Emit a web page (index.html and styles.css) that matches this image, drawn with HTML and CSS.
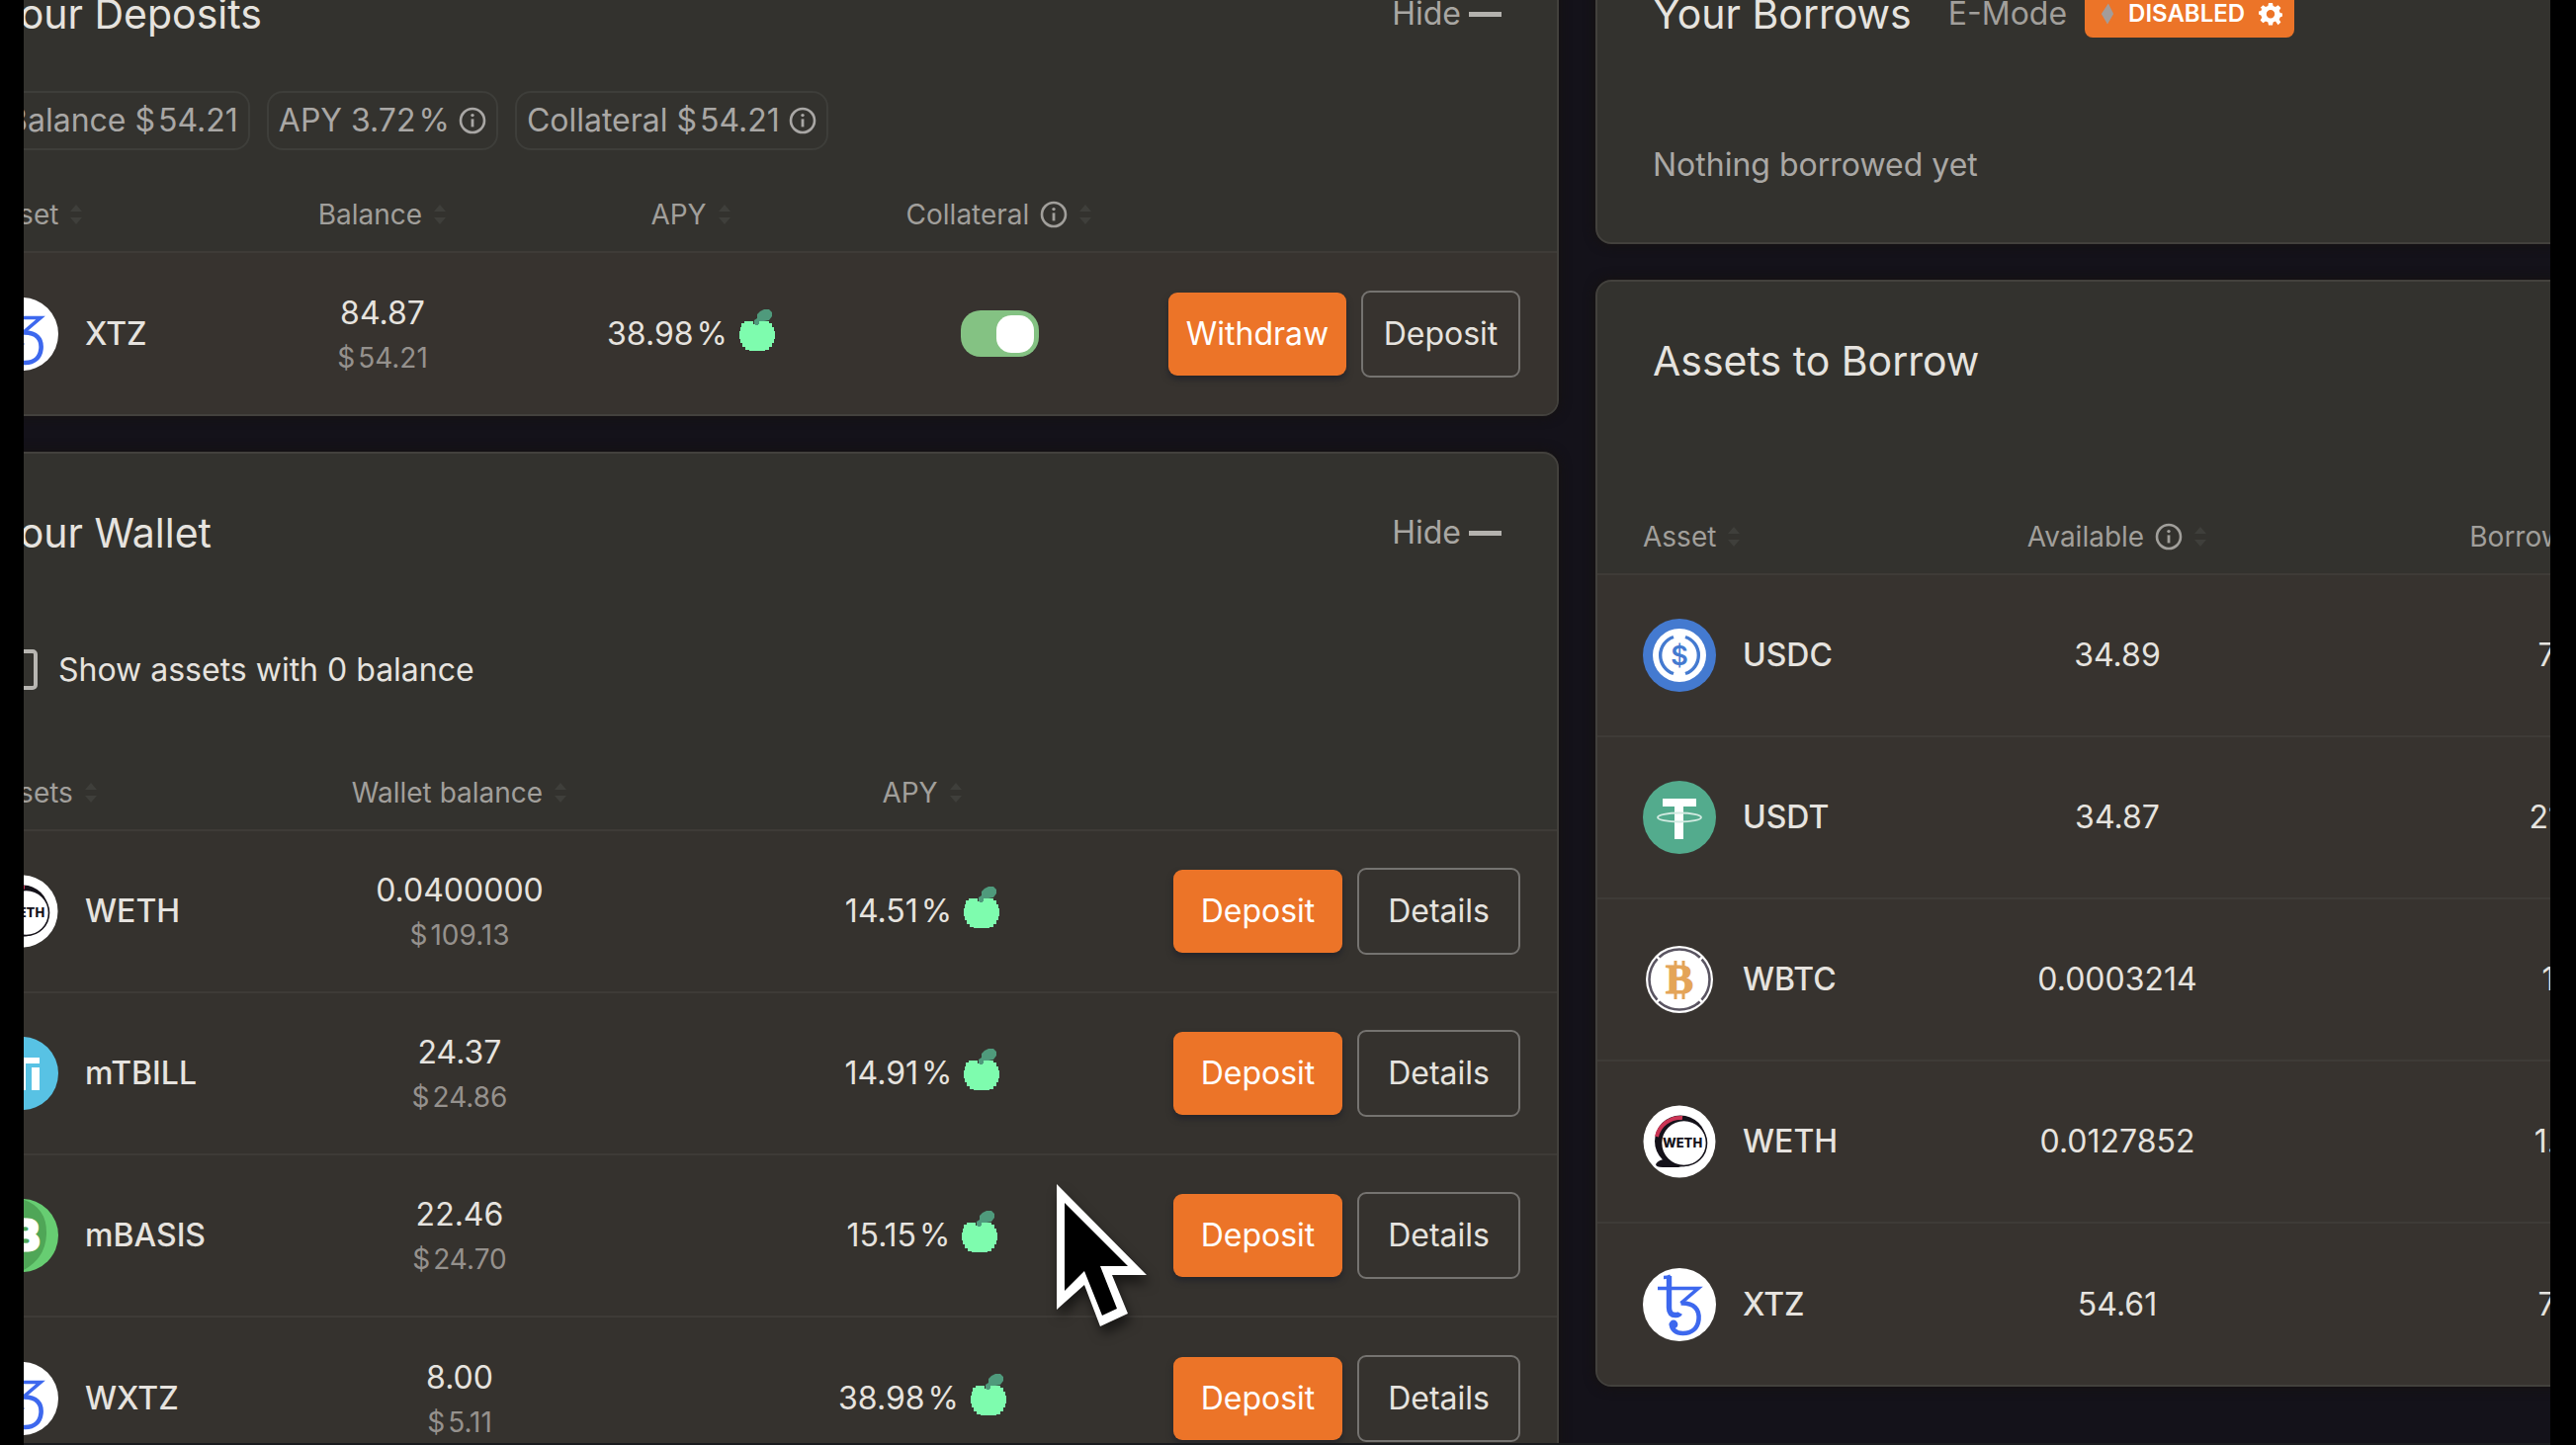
FILE: index.html
```html
<!DOCTYPE html>
<html lang="en">
<head>
<meta charset="utf-8">
<title>Dashboard</title>
<meta name="viewport" content="width=device-width, initial-scale=1">
<link rel="stylesheet" href="styles.css">
</head>
<body>
<svg class="sprite" aria-hidden="true">
  <symbol id="i-info" viewBox="0 0 28 28"><circle cx="14" cy="14" r="12" fill="none" stroke="currentColor" stroke-width="2.6"/><circle cx="14" cy="8.6" r="1.7" fill="currentColor"/><path d="M14 12.4v8" stroke="currentColor" stroke-width="2.8"/></symbol>
  <symbol id="i-sort" viewBox="0 0 14 24"><path d="M7 2l6 7H1zM7 22l6-7H1z" fill="currentColor"/></symbol>
  <symbol id="i-apple" viewBox="0 0 36 42"><path d="M15 16v-5l3-2V5l3-3 4-2h5l3 3v4l-3 4-5 1-4 2-1 2z" fill="#4f9a7c"/><path d="M5 12h9v3h6v-3h10v2h3v4h2v4h1v8h-1v4h-2v4h-3v3h-4v2H10v-2H6v-3H3v-4H1v-4H0v-8h1v-4h1v-4h3z" fill="#7efcae"/><path d="M16 16v-4l3-1v5z" fill="#4f9a7c"/></symbol>
  <symbol id="c-usdc" viewBox="0 0 74 74"><circle cx="37" cy="37" r="37" fill="#447ad0"/><circle cx="37" cy="37" r="27" fill="#fff"/><path d="M31 18.500a19.500 19.500 0 0 0 0 37M43 18.500a19.500 19.500 0 0 1 0 37" fill="none" stroke="#447ad0" stroke-width="3.400"/><text x="37" y="47" text-anchor="middle" font-family="Inter, sans-serif" font-size="27" font-weight="600" fill="#447ad0">$</text></symbol>
  <symbol id="c-usdt" viewBox="0 0 74 74"><circle cx="37" cy="37" r="37" fill="#53ab8d"/><path d="M20 18h34v8H41v33h-9V26H20z" fill="#fff"/><ellipse cx="37" cy="37" rx="22" ry="4.500" fill="none" stroke="#d3ebe2" stroke-width="1.800"/></symbol>
  <symbol id="c-wbtc" viewBox="0 0 74 74"><circle cx="37" cy="37" r="34" fill="#fff"/><circle cx="37" cy="37" r="30.500" fill="none" stroke="#5a5562" stroke-width="2.600" stroke-dasharray="45.400 2.500" stroke-dashoffset="22.700"/><path d="M33 18v6M41 18v6M33 50v7M41 50v7" stroke="#e4a458" stroke-width="3"/><text x="37" y="51" text-anchor="middle" font-family="Liberation Serif, serif" font-size="42" font-weight="700" fill="#e4a458" stroke="#e4a458" stroke-width="1.200">B</text></symbol>
  <symbol id="c-weth" viewBox="0 0 74 74"><circle cx="37" cy="37" r="36.500" fill="#fff"/><circle cx="38" cy="36.500" r="26" fill="#15121a"/><path d="M14 32a24.500 24.500 0 0 1 26-19" fill="none" stroke="#cc3555" stroke-width="4"/><path d="M13 60q3-5 10-5l15 8H20q-7 0-7-3z" fill="#15121a"/><circle cx="41.500" cy="38.500" r="23" fill="#fff" stroke="#15121a" stroke-width="1.600"/><text x="40" y="43" text-anchor="middle" font-family="Inter, sans-serif" font-size="13" font-weight="800" fill="#15121a">WETH</text></symbol>
  <symbol id="c-xtz" viewBox="0 0 74 74"><circle cx="37" cy="37" r="37" fill="#fff"/><path d="M26.500 8v32q0 8 7 7.500 3 0 4-2" fill="none" stroke="#3d68ee" stroke-width="5.400"/><path d="M21 9.500q4 0 7-1.500M15 20.500h41L38.500 35.500" fill="none" stroke="#3d68ee" stroke-width="3.600"/><path d="M38.500 35.500C52 35 57.500 42 56.500 52c-1 9-7 14-16 14-7 0-12-4-11.500-10" fill="none" stroke="#3d68ee" stroke-width="4.600"/><circle cx="31" cy="57" r="4.400" fill="#3d68ee"/></symbol>
  <symbol id="c-mtbill" viewBox="0 0 74 74"><circle cx="37" cy="37" r="37" fill="#58c2e4"/><path d="M16 21h39v6H16zM34 27h7v27h-7zM47 31h8v23h-8z" fill="#fff"/></symbol>
  <symbol id="c-mbasis" viewBox="0 0 74 74"><circle cx="37" cy="37" r="37" fill="#67cd72"/><path d="M37 0q26 8 25 36-1 26-27 38A37 37 0 0 1 37 0z" fill="#4fa657"/><text x="41" y="52" text-anchor="middle" font-family="Inter, sans-serif" font-size="42" font-weight="800" fill="#fff" stroke="#fff" stroke-width="3" stroke-linejoin="round">B</text></symbol>
</svg>

<div class="frame">
  <main class="board">
    <div class="column">
      <section class="card">
        <header class="card-head">
          <h2>Your Deposits</h2>
          <button class="hide" type="button">Hide<span class="dash"></span></button>
        </header>
        <div class="chips">
          <span class="chip">Balance <span><i>$</i>54.21</span></span>
          <span class="chip">APY <span>3.72<i class="pct">%</i></span><svg class="info"><use href="#i-info"/></svg></span>
          <span class="chip">Collateral <span><i>$</i>54.21</span><svg class="info"><use href="#i-info"/></svg></span>
        </div>
        <table class="tinted">
          <colgroup><col class="c-first"><col><col><col><col class="c-last"></colgroup>
          <thead><tr>
            <th><span class="th">Asset<svg class="sort"><use href="#i-sort"/></svg></span></th>
            <th><span class="th">Balance<svg class="sort"><use href="#i-sort"/></svg></span></th>
            <th><span class="th">APY<svg class="sort"><use href="#i-sort"/></svg></span></th>
            <th><span class="th">Collateral<svg class="info"><use href="#i-info"/></svg><svg class="sort"><use href="#i-sort"/></svg></span></th>
            <td></td>
          </tr></thead>
          <tbody><tr>
            <td><span class="asset"><svg><use href="#c-xtz"/></svg>XTZ</span></td>
            <td><span class="amount">84.87<small><i>$</i>54.21</small></span></td>
            <td><span class="apy"><span>38.98<i class="pct">%</i></span><svg><use href="#i-apple"/></svg></span></td>
            <td><input class="switch" type="checkbox" aria-label="Use XTZ as collateral" checked></td>
            <td><span class="actions"><button class="btn primary wide" type="button">Withdraw</button><button class="btn narrow" type="button">Deposit</button></span></td>
          </tr></tbody>
        </table>
      </section>

      <section class="card">
        <header class="card-head">
          <h2>Your Wallet</h2>
          <button class="hide" type="button">Hide<span class="dash"></span></button>
        </header>
        <label class="zero"><input type="checkbox">Show assets with 0 balance</label>
        <table>
          <colgroup><col class="c-first"><col><col><col class="c-last"></colgroup>
          <thead><tr>
            <th><span class="th">Assets<svg class="sort"><use href="#i-sort"/></svg></span></th>
            <th><span class="th">Wallet balance<svg class="sort"><use href="#i-sort"/></svg></span></th>
            <th><span class="th">APY<svg class="sort"><use href="#i-sort"/></svg></span></th>
            <td></td>
          </tr></thead>
          <tbody>
          <tr>
            <td><span class="asset"><svg><use href="#c-weth"/></svg>WETH</span></td>
            <td><span class="amount">0.0400000<small><i>$</i>109.13</small></span></td>
            <td><span class="apy"><span>14.51<i class="pct">%</i></span><svg><use href="#i-apple"/></svg></span></td>
            <td><span class="actions"><button class="btn primary" type="button">Deposit</button><button class="btn" type="button">Details</button></span></td>
          </tr>
          <tr>
            <td><span class="asset"><svg><use href="#c-mtbill"/></svg>mTBILL</span></td>
            <td><span class="amount">24.37<small><i>$</i>24.86</small></span></td>
            <td><span class="apy"><span>14.91<i class="pct">%</i></span><svg><use href="#i-apple"/></svg></span></td>
            <td><span class="actions"><button class="btn primary" type="button">Deposit</button><button class="btn" type="button">Details</button></span></td>
          </tr>
          <tr>
            <td><span class="asset"><svg><use href="#c-mbasis"/></svg>mBASIS</span></td>
            <td><span class="amount">22.46<small><i>$</i>24.70</small></span></td>
            <td><span class="apy"><span>15.15<i class="pct">%</i></span><svg><use href="#i-apple"/></svg></span></td>
            <td><span class="actions"><button class="btn primary" type="button">Deposit</button><button class="btn" type="button">Details</button></span></td>
          </tr>
          <tr>
            <td><span class="asset"><svg><use href="#c-xtz"/></svg>WXTZ</span></td>
            <td><span class="amount">8.00<small><i>$</i>5.11</small></span></td>
            <td><span class="apy"><span>38.98<i class="pct">%</i></span><svg><use href="#i-apple"/></svg></span></td>
            <td><span class="actions"><button class="btn primary" type="button">Deposit</button><button class="btn" type="button">Details</button></span></td>
          </tr>
          </tbody>
        </table>
      </section>
    </div>

    <div class="column">
      <section class="card">
        <header class="card-head start">
          <h2>Your Borrows</h2>
          <span class="mode">E-Mode</span>
          <button class="badge" type="button">
            <svg class="bolt" viewBox="0 0 16 24"><path d="M9 0L1 12l7 12 7-12z" fill="#a39c9a"/></svg>
            DISABLED
            <svg class="gear" viewBox="0 0 24 24"><path d="M10 1h4l.6 3 2.400 1 2.600-1.700 2.800 2.800-1.700 2.600 1 2.400 2.300.4v3l-2.300.9-1 2.400 1.700 2.600-2.800 2.800L17 19.500l-2.400 1-.6 3h-4l-.6-3-2.400-1-2.600 1.700-2.800-2.800 1.700-2.600-1-2.400-2.300-.9v-3l2.300-.4 1-2.400L1.600 6.100l2.800-2.800L7 5l2.400-1zM12 8a4.200 4.200 0 1 0 0 8.400A4.200 4.200 0 0 0 12 8z" fill="#fff" fill-rule="evenodd"/></svg>
          </button>
        </header>
        <p class="empty">Nothing borrowed yet</p>
      </section>

      <section class="card">
        <header class="card-head tall">
          <h2>Assets to Borrow</h2>
        </header>
        <table class="tinted">
          <colgroup><col class="c-first"><col><col><col class="c-last"></colgroup>
          <thead><tr>
            <th><span class="th">Asset<svg class="sort"><use href="#i-sort"/></svg></span></th>
            <th><span class="th">Available<svg class="info"><use href="#i-info"/></svg><svg class="sort"><use href="#i-sort"/></svg></span></th>
            <th><span class="th">Borrow APY<svg class="info"><use href="#i-info"/></svg><svg class="sort"><use href="#i-sort"/></svg></span></th>
            <td></td>
          </tr></thead>
          <tbody>
          <tr><td><span class="asset"><svg><use href="#c-usdc"/></svg>USDC</span></td><td>34.89</td><td>7.16%</td><td></td></tr>
          <tr><td><span class="asset"><svg><use href="#c-usdt"/></svg>USDT</span></td><td>34.87</td><td>21.15%</td><td></td></tr>
          <tr><td><span class="asset"><svg><use href="#c-wbtc"/></svg>WBTC</span></td><td>0.0003214</td><td>1.11%</td><td></td></tr>
          <tr><td><span class="asset"><svg><use href="#c-weth"/></svg>WETH</span></td><td>0.0127852</td><td>1.56%</td><td></td></tr>
          <tr><td><span class="asset"><svg><use href="#c-xtz"/></svg>XTZ</span></td><td>54.61</td><td>7.16%</td><td></td></tr>
          </tbody>
        </table>
      </section>
    </div>
  </main>
  <svg class="cursor" viewBox="0 0 92 145" aria-hidden="true"><path d="M0 0L91 92H56l16 39-28 13-16-42L0 127z" fill="#fff"/><path d="M8 19l64 64H44l17 43-15 7-18-45-20 20z" fill="#000"/></svg>
</div>
</body>
</html>
```
FILE: styles.css
```css
* { box-sizing: border-box; }

body {
  margin: 0;
  background: #000;
  color: #e6e3df;
  font: 400 32px/36px Inter, "Liberation Sans", sans-serif;
}

.sprite { display: none; }

button, input { font: inherit; color: inherit; margin: 0; }
i { font-style: normal; margin-right: 3px; }
i.pct { margin: 0 0 0 3px; }

.frame {
  position: relative;
  height: 100vh;
  margin: 0 26px 0 24px;
  overflow: hidden;
  background: #14121a;
  border-bottom: 2px solid #1a1b1e;
}

/* Zoomed board: it runs past the frame on every side */
.board {
  display: grid;
  grid-template-columns: 1fr 1fr;
  align-items: start;
  gap: 37px;
  width: calc(100% + 761px);
  margin: -68px 0 0 -87px;
}

.column { display: grid; gap: 36px; }

.card {
  background: #33322e;
  border: 2px solid #43413d;
  border-radius: 16px;
  overflow: hidden;
  box-shadow: 0 0 12px #16120f;
}

.card-head {
  display: flex;
  align-items: center;
  justify-content: space-between;
  padding: 56px 56px 0;
}
.card-head.start { justify-content: flex-start; }
.card-head.tall { padding-bottom: 114px; }

h2 { margin: 0; font-size: 41px; line-height: 48px; font-weight: 400; }

.hide {
  display: flex;
  align-items: center;
  gap: 8px;
  padding: 0;
  border: 0;
  background: none;
  color: #a9a7a3;
}
.dash { width: 33px; height: 5px; background: #b4b2ae; }

.mode { margin: 0 18px 0 37px; color: #a19f9b; }
.badge {
  display: flex;
  align-items: center;
  gap: 14px;
  height: 48px;
  padding: 0 12px 0 16px;
  border: 0;
  border-radius: 8px;
  background: #ec7428;
  color: #fff;
  font-size: 24px;
  font-weight: 600;
}
.bolt { width: 14px; height: 24px; }
.gear { width: 24px; height: 24px; }

.chips {
  display: flex;
  gap: 17px;
  margin: 54px 56px 25px;
}
.chip {
  display: flex;
  align-items: center;
  gap: 9px;
  height: 60px;
  padding: 0 10px;
  border: 2px solid #3e3e3a;
  border-radius: 16px;
  color: #a9a7a5;
}
.info { width: 28px; height: 28px; }
.sort { width: 14px; height: 24px; color: #3f3f3b; }

.empty { margin: 111px 56px 60px; color: #aaa8a5; }

.zero {
  display: flex;
  align-items: center;
  gap: 21px;
  margin: 94px 56px 64px;
  padding-left: 2px;
}
.zero input {
  appearance: none;
  width: 41px;
  height: 41px;
  border: 4px solid #b8b6b2;
  border-radius: 5px;
}

table { width: 100%; table-layout: fixed; border-collapse: collapse; }
.c-first { width: 292px; }
.c-last { width: 408px; }
th, td { padding: 0; text-align: center; }
th { height: 78px; font-weight: 400; font-size: 28px; color: #a19f9b; }
th:first-child, td:first-child { text-align: left; padding-left: 46px; }
td:last-child { padding-right: 37px; }
.th { display: inline-flex; align-items: center; gap: 11px; vertical-align: middle; }

tbody tr { height: 164px; border-top: 2px solid #3e3b37; background: #35322e; }
.tinted tbody tr { background: #37332f; }

.asset { display: flex; align-items: center; gap: 27px; font-weight: 500; }
.asset svg { width: 74px; height: 74px; }

.amount { display: grid; gap: 9px; padding-top: 3px; }
.amount small { font-size: 28px; color: #95918d; }

.apy { display: inline-flex; align-items: center; gap: 12px; }
.apy svg { width: 36px; height: 42px; margin-bottom: 8px; }

.switch {
  appearance: none;
  display: grid;
  justify-content: end;
  align-items: center;
  width: 79px;
  height: 47px;
  margin: 0 auto;
  padding: 0 5px;
  border-radius: 20px;
  background: #84c283;
}
.switch::before {
  content: "";
  width: 38px;
  height: 38px;
  border-radius: 15px;
  background: #fff;
}

.actions { display: flex; align-items: center; justify-content: flex-end; gap: 15px; }
.btn {
  width: 165px;
  height: 88px;
  padding: 0;
  border: 2px solid #757370;
  border-radius: 9px;
  background: none;
}
.btn.primary {
  width: 171px;
  height: 84px;
  border: 0;
  background: #ec7428;
  color: #fff;
  box-shadow: 0 4px 6px #25252a;
}
.btn.wide { width: 180px; }
.btn.narrow { width: 161px; }

/* The pointer floats over the board */
.cursor {
  position: absolute;
  left: 1045px;
  top: 1198px;
  width: 92px;
  height: 145px;
  overflow: visible;
  filter: drop-shadow(3px 8px 6px #0008);
}
```
